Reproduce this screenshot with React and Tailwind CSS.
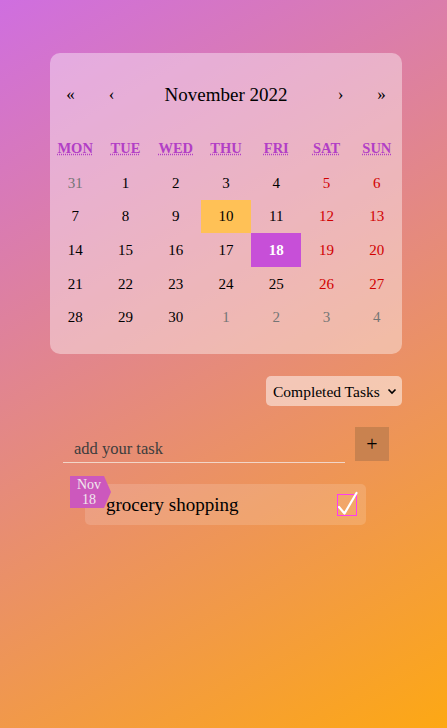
import React from "react";

const rows = [
  [["31", "o"], ["1", "n"], ["2", "n"], ["3", "n"], ["4", "n"], ["5", "w"], ["6", "w"]],
  [["7", "n"], ["8", "n"], ["9", "n"], ["10", "t"], ["11", "n"], ["12", "w"], ["13", "w"]],
  [["14", "n"], ["15", "n"], ["16", "n"], ["17", "n"], ["18", "s"], ["19", "w"], ["20", "w"]],
  [["21", "n"], ["22", "n"], ["23", "n"], ["24", "n"], ["25", "n"], ["26", "w"], ["27", "w"]],
  [["28", "n"], ["29", "n"], ["30", "n"], ["1", "o"], ["2", "o"], ["3", "o"], ["4", "o"]],
];

const days = ["MON", "TUE", "WED", "THU", "FRI", "SAT", "SUN"];

function Cell({ v, k }) {
  let cls = "text-black";
  if (k === "o") cls = "text-[#757575]";
  if (k === "w") cls = "text-[#d10000]";
  if (k === "t") cls = "bg-[#ffc156] text-black";
  if (k === "s") cls = "bg-[#c74fd8] text-white font-bold";
  return (
    <div className={`h-[33.7px] flex items-center justify-center text-[15px] ${cls}`}>
      {v}
    </div>
  );
}

export default function App() {
  return (
    <div
      className="w-[447px] h-[728px] overflow-hidden bg-[linear-gradient(150deg,#cf6ee0,#fda814)] pt-[53px]"
      style={{ fontFamily: '"Liberation Serif", serif' }}
    >
      <div className="ml-[50px] w-[352px] rounded-[10px] bg-white/40 pt-[20px] pb-[20px]">
        <div className="flex h-[44px] items-center">
          <div className="w-[41px] text-center text-[17px] text-black">«</div>
          <div className="w-[41px] text-center text-[17px] text-black">‹</div>
          <div className="flex-1 text-center text-[19px] text-black">November 2022</div>
          <div className="w-[41px] text-center text-[17px] text-black">›</div>
          <div className="w-[41px] text-center text-[17px] text-black">»</div>
        </div>
        <div className="grid grid-cols-7 mt-[15px] h-[34px] items-center">
          {days.map((d) => (
            <div
              key={d}
              className="text-center text-[14.5px] font-bold text-[#b23fc6] underline decoration-dotted underline-offset-1"
            >
              {d}
            </div>
          ))}
        </div>
        <div className="grid grid-cols-7">
          {rows.flat().map(([v, k], i) => (
            <Cell key={i} v={v} k={k} />
          ))}
        </div>
      </div>

      <div className="ml-[266px] mt-[22px] flex h-[30px] w-[136px] items-center justify-between rounded-[5px] bg-white/50 pl-[7px] pr-[5px]">
        <span className="text-[15.5px] text-black">Completed Tasks</span>
        <svg width="10" height="10" viewBox="0 0 10 10">
          <path d="M1.5 3.5 L5 7 L8.5 3.5" fill="none" stroke="#000" strokeWidth="1.6" />
        </svg>
      </div>

      <div className="ml-[63px] mt-[21px] flex items-start">
        <div className="w-[282px] h-[36px] border-b border-[#f2d6c8] flex items-end pb-[1px]">
          <input
            className="w-full bg-transparent pl-[11px] text-[16.5px] text-black outline-none placeholder:text-[#3d3d3d]"
            placeholder="add your task"
            style={{ fontFamily: '"Liberation Serif", serif' }}
          />
        </div>
        <div className="ml-[10px] flex h-[34px] w-[34px] items-center justify-center bg-[#c9824f] text-[20px] text-black">
          +
        </div>
      </div>

      <div className="relative ml-[85px] mt-[21px] flex h-[41px] w-[281px] items-center rounded-[5px] bg-white/15 pl-[21px] pr-[9px]">
        <div className="absolute left-[-15px] top-[-8px] flex h-[32px] w-[41px] items-center">
          <svg className="absolute inset-0" width="41" height="32" viewBox="0 0 41 32">
            <polygon points="0,0 34,0 41,16 34,32 0,32" fill="#cc58bd" />
          </svg>
          <div className="relative w-[38px] text-center text-[14px] leading-[15px] text-[#f1e8ee]">
            Nov
            <br />
            18
          </div>
        </div>
        <span className="flex-1 text-[19px] text-black">grocery shopping</span>
        <div className="relative h-[22px] w-[20px] border-[1.5px] border-[#ff3cf0]">
          <svg className="absolute left-[-1px] top-[-4px]" width="22" height="26" viewBox="0 0 22 26">
            <path d="M2 16 L7.5 22.5 L19.5 2" fill="none" stroke="#fff" strokeWidth="2.2" strokeLinecap="round" strokeLinejoin="round" />
          </svg>
        </div>
      </div>
    </div>
  );
}
